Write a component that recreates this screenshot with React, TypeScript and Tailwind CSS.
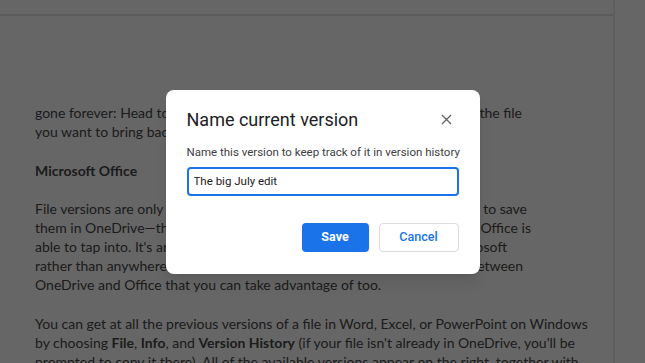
import React, { useState } from "react"

type Row = { left: React.ReactNode; mid?: string; right?: string; w?: string }

// Lines of the article behind the dialog; the middle of a long row is covered by the modal
const intro: Row[] = [
  {
    left: <>gone forever: Head to <a className="text-[#4f4a8c] underline">the Recycle bin</a></>,
    mid: " in OneDrive, sort by date, and",
    right: " find the file",
    w: "w-[487px]",
  },
  { left: <>you want to bring back, then click Restore to recover it.</> },
]

const office: Row[] = [
  { left: "File versions are only available in Office", mid: " if you've set up your", right: " system to save", w: "w-[492px]" },
  { left: "them in OneDrive—the cloud storage service", mid: " is one that", right: " Microsoft Office is", w: "w-[496px]" },
  { left: "able to tap into. It's another reason to keep", mid: " your files stored", right: " in Microsoft", w: "w-[472px]" },
  { left: "rather than anywhere else, and there's plenty", mid: " of tight", right: " integration between", w: "w-[488px]" },
  { left: "OneDrive and Office that you can take advantage of too." },
]

const windows: Row[] = [
  { left: "You can get at all the previous versions of a file in Word, Excel, or PowerPoint on Windows" },
  {
    left: (
      <>
        by choosing <b>File</b>, <b>Info</b>, and <b>Version History</b> (if your file isn't already in OneDrive, you'll be
      </>
    ),
  },
  { left: "prompted to copy it there). All of the available versions appear on the right, together with" },
]

const Paragraph = ({ rows }: { rows: Row[] }) => (
  <p className="mb-[19.5px]">
    {rows.map((row, i) =>
      row.right ? (
        <span key={i} className={`flex whitespace-nowrap ${row.w}`}>
          <span className="shrink-0">{row.left}</span>
          <span className="min-w-0 flex-1 overflow-hidden">{row.mid}</span>
          <span className="shrink-0 whitespace-pre">{row.right}</span>
        </span>
      ) : (
        <span key={i} className="block whitespace-nowrap">
          {row.left}
        </span>
      )
    )}
  </p>
)

export default function App() {
  const [name, setName] = useState("The big July edit")

  return (
    <div className="relative h-[363px] w-[645px] overflow-hidden bg-white">
      {/* Article page underneath */}
      <div className="flex h-full">
        <div className="w-[613px] shrink-0">
          <div className="h-[16px] border-b-2 border-[#e4e4e4] bg-white" />
          <div
            className="px-[35px] pt-[87px] text-[14px] leading-[19px] text-[#474747]"
            style={{ fontFamily: "Lato, 'Open Sans', sans-serif" }}
          >
            <Paragraph rows={intro} />
            <p className="mb-[19.5px] font-bold">Microsoft Office</p>
            <Paragraph rows={office} />
            <Paragraph rows={windows} />
          </div>
        </div>
        <div className="flex-1 border-l-2 border-[#ececec] bg-white" />
      </div>

      {/* Modal */}
      <div className="absolute inset-0 flex items-center justify-center bg-black/60">
        <div
          className="flex h-[184px] w-[314px] flex-col rounded-[8px] bg-white px-[21px] pt-[18px] shadow-lg"
          style={{ fontFamily: "Roboto, Arial, sans-serif" }}
        >
          <div className="flex items-center justify-between">
            <h2 className="text-[18px] leading-[24px] text-[#202124]">Name current version</h2>
            <button className="mr-[2px] flex h-[20px] w-[20px] items-center justify-center text-[#5f6368]">
              <svg width="11" height="11" viewBox="0 0 11 11" fill="none" stroke="currentColor" strokeWidth="1.3">
                <path d="M1 1l9 9M10 1l-9 9" />
              </svg>
            </button>
          </div>
          <p className="mt-[12px] whitespace-nowrap text-[11.5px] leading-[16px] text-[#3c4043]">
            Name this version to keep track of it in version history
          </p>
          <input
            value={name}
            onChange={e => setName(e.target.value)}
            autoFocus
            className="mt-[7px] h-[29px] w-full rounded-[4px] border-2 border-[#1a73e8] px-[5px] text-[11.5px] text-[#202124] caret-[#202124] outline-none"
          />
          <div className="mt-[27px] flex justify-end gap-[10px]">
            <button className="h-[29px] w-[67px] rounded-[4px] bg-[#1a73e8] text-[12.5px] font-bold text-white">
              Save
            </button>
            <button className="h-[29px] w-[80px] rounded-[4px] border border-[#dadce0] bg-white text-[12.5px] font-medium text-[#1a73e8]">
              Cancel
            </button>
          </div>
        </div>
      </div>
    </div>
  )
}
